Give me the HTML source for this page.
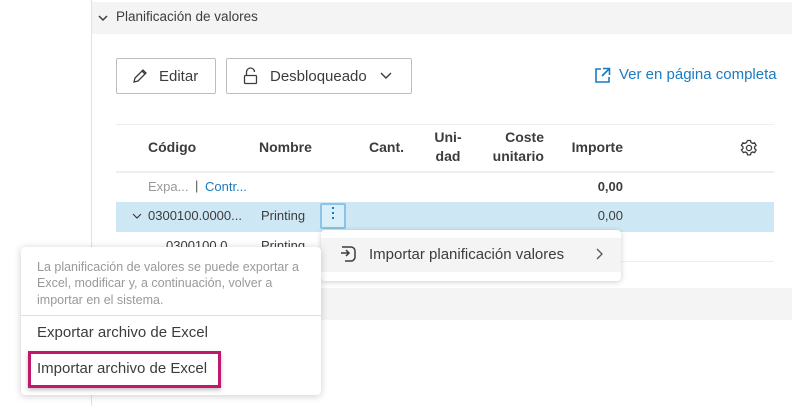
<!DOCTYPE html>
<html><head><meta charset="utf-8"><style>
*{box-sizing:border-box;margin:0;padding:0}
body{width:792px;height:406px;overflow:hidden;background:#fff;font-family:"Liberation Sans",sans-serif;color:#3c3c3c;position:relative;font-size:14px}
.a{position:absolute}
.btn{position:absolute;border:1px solid #bdbdbd;border-radius:2px;background:#fff;height:36px;top:58px;display:flex;align-items:center;font-size:15px;color:#3c3c3c}
.th{position:absolute;font-weight:bold;font-size:14px;color:#3c3c3c;line-height:19px}
</style></head><body>
<div class="a" style="left:91px;top:0;width:1px;height:406px;background:#e2e2e2"></div>
<div class="a" style="left:92px;top:2px;width:700px;height:32px;background:#f4f4f4"></div>
<svg class="a" style="left:97px;top:13px" width="12" height="10" viewBox="0 0 12 10"><path d="M2 3l4 4 4-4" fill="none" stroke="#3c3c3c" stroke-width="1.5"/></svg>
<div class="a" style="left:116px;top:9px;font-size:13.5px;color:#3c3c3c">Planificación de valores</div>

<div class="btn" style="left:116px;width:100px"><svg style="margin-left:14px" width="18" height="18" viewBox="0 0 18 18"><path d="M3 15l1-4 8-8 3 3-8 8z M11 4l3 3" fill="none" stroke="#3c3c3c" stroke-width="1.3"/></svg><span style="margin-left:10px">Editar</span></div>
<div class="btn" style="left:226px;width:186px"><svg style="margin-left:16px" width="16" height="18" viewBox="0 0 16 18"><path d="M3.5 8V5a4 4 0 0 1 8 0" fill="none" stroke="#3c3c3c" stroke-width="1.3"/><rect x="1.5" y="8.5" width="12" height="8" rx="1" fill="none" stroke="#3c3c3c" stroke-width="1.3"/></svg><span style="margin-left:11px">Desbloqueado</span><svg style="margin-left:12px" width="14" height="10" viewBox="0 0 14 10"><path d="M2 2l5 5 5-5" fill="none" stroke="#3c3c3c" stroke-width="1.4"/></svg></div>

<svg class="a" style="left:594px;top:67px" width="17" height="17" viewBox="0 0 17 17"><path d="M7 2H2v13h13v-5" fill="none" stroke="#1a7bc0" stroke-width="1.6"/><path d="M9 1.5h6.5V8M15.5 1.5L8 9" fill="none" stroke="#1a7bc0" stroke-width="1.6"/></svg>
<div class="a" style="left:619px;top:66px;font-size:15px;color:#1a7bc0">Ver en página completa</div>

<div class="a" style="left:116px;top:124px;width:658px;height:1px;background:#eee"></div>
<div class="th" style="left:148px;top:138px">Código</div>
<div class="th" style="left:259px;top:138px">Nombre</div>
<div class="th" style="left:369px;top:138px">Cant.</div>
<div class="th" style="left:430px;top:128px;width:36px;text-align:center">Uni-<br>dad</div>
<div class="th" style="left:470px;top:128px;width:74px;text-align:right">Coste<br>unitario</div>
<div class="th" style="left:560px;top:138px;width:63px;text-align:right">Importe</div>
<svg class="a" style="left:740px;top:139px" width="18" height="18" viewBox="0 0 18 18"><path d="M7.5 1.5h3l.5 2 1.6.9 2-.6 1.5 2.6-1.5 1.4v1.8l1.5 1.4-1.5 2.6-2-.6-1.6.9-.5 2h-3l-.5-2-1.6-.9-2 .6L1.4 11l1.5-1.4V7.8L1.4 6.4 2.9 3.8l2 .6 1.6-.9z" fill="none" stroke="#3c3c3c" stroke-width="1.3"/><circle cx="9" cy="9" r="2.6" fill="none" stroke="#3c3c3c" stroke-width="1.3"/></svg>
<div class="a" style="left:116px;top:171px;width:658px;height:2px;background:#eee"></div>
<div class="a" style="left:148px;top:179px;font-size:13px;color:#999">Expa...</div>
<div class="a" style="left:195px;top:178px;font-size:13px;color:#555">|</div>
<div class="a" style="left:205px;top:179px;font-size:13px;color:#1a7bc0">Contr...</div>
<div class="a" style="left:560px;top:179px;width:63px;text-align:right;font-weight:bold;font-size:13px">0,00</div>
<div class="a" style="left:116px;top:202px;width:658px;height:30px;background:#cde8f4"></div>
<svg class="a" style="left:132px;top:212px" width="10" height="8" viewBox="0 0 10 8"><path d="M1 2l4 4 4-4" fill="none" stroke="#3c3c3c" stroke-width="1.2"/></svg>
<div class="a" style="left:148px;top:208px;font-size:13px">0300100.0000...</div>
<div class="a" style="left:261px;top:208px;font-size:13px">Printing</div>
<div class="a" style="left:320px;top:203px;width:26px;height:26px;border:2px solid #8cc3e6;border-radius:2px;background:#d8eef8"></div>
<div class="a" style="left:332px;top:207px;width:2px;height:2px;background:#1a7bc0;box-shadow:0 5px #1a7bc0,0 10px #1a7bc0"></div>
<div class="a" style="left:560px;top:208px;width:63px;text-align:right;font-size:13px">0,00</div>
<div class="a" style="left:166px;top:238px;font-size:13px">0300100.0</div>
<div class="a" style="left:261px;top:238px;font-size:13px">Printing</div>
<div class="a" style="left:116px;top:261px;width:658px;height:1px;background:#eee"></div>
<div class="a" style="left:92px;top:288px;width:700px;height:32px;background:#f4f4f4"></div>

<div class="a" style="left:321px;top:230px;width:300px;height:51px;background:#fff;border-radius:4px;box-shadow:0 1px 6px rgba(0,0,0,.2)"></div>
<div class="a" style="left:321px;top:238px;width:300px;height:34px;background:#f4f4f4"></div>
<svg class="a" style="left:339px;top:245px" width="18" height="18" viewBox="0 0 18 18"><path d="M3 2h9a4 4 0 0 1 4 4v6a4 4 0 0 1-4 4H6" fill="none" stroke="#3c3c3c" stroke-width="1.5"/><path d="M2 8h8M7 5l3 3-3 3" fill="none" stroke="#3c3c3c" stroke-width="1.5"/></svg>
<div class="a" style="left:369px;top:246px;font-size:15px">Importar planificación valores</div>
<svg class="a" style="left:594px;top:247px" width="10" height="14" viewBox="0 0 10 14"><path d="M3 2l5 5-5 5" fill="none" stroke="#555" stroke-width="1.3"/></svg>

<div class="a" style="left:21px;top:247px;width:300px;height:148px;background:#fff;border-radius:4px;box-shadow:0 1px 8px rgba(0,0,0,.2)"></div>
<div class="a" style="left:37px;top:259px;width:268px;font-size:12.5px;line-height:16.3px;color:#999">La planificación de valores se puede exportar a Excel, modificar y, a continuación, volver a importar en el sistema.</div>
<div class="a" style="left:21px;top:315px;width:300px;height:1px;background:#ddd"></div>
<div class="a" style="left:37px;top:324px;font-size:15px">Exportar archivo de Excel</div>
<div class="a" style="left:28px;top:351px;width:193px;height:37px;border:3px solid #c0186a;box-shadow:0 2px 4px rgba(0,0,0,.25)"></div>
<div class="a" style="left:37px;top:360px;font-size:15px">Importar archivo de Excel</div>
</body></html>
